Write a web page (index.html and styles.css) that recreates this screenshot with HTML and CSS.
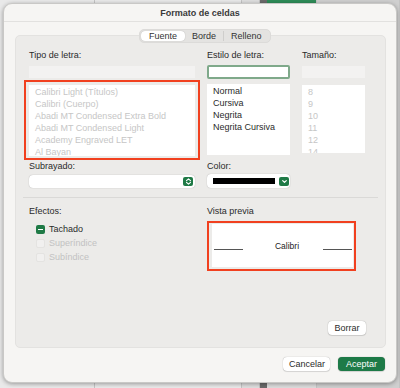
FILE: index.html
```html
<!DOCTYPE html>
<html lang="es">
<head>
  <meta charset="UTF-8" />
  <meta name="viewport" content="width=device-width, initial-scale=1" />
  <title>Formato de celdas</title>
  <link rel="stylesheet" href="styles.css">
</head>
<body>

  <!-- hoja de fondo -->
  <div class="sheet">
    <div class="col c1"></div>
    <div class="col c2"></div>
    <div class="col c3"></div>
    <div class="col c4"><span class="cell-green"></span></div>
    <div class="col c5"></div>
  </div>

  <div class="dialog">
    <div class="titlebar">Formato de celdas</div>

    <div class="body">
      <div class="tabs">
        <span class="tab active">Fuente</span>
        <span class="tab">Borde</span>
        <span class="tab sep">Relleno</span>
      </div>

      <div class="panel">
        <div class="row top">
          <div class="field f-name">
            <label>Tipo de letra:</label>
            <div class="input disabled"></div>
            <div class="mark list-mark">
              <ul class="list dim">
                <li>Calibri Light (Títulos)</li>
                <li>Calibri (Cuerpo)</li>
                <li>Abadi MT Condensed Extra Bold</li>
                <li>Abadi MT Condensed Light</li>
                <li>Academy Engraved LET</li>
                <li>Al Bayan</li>
              </ul>
            </div>
          </div>
          <div class="field f-style">
            <label>Estilo de letra:</label>
            <div class="input focus"></div>
            <ul class="list">
              <li>Normal</li>
              <li>Cursiva</li>
              <li>Negrita</li>
              <li>Negrita Cursiva</li>
            </ul>
          </div>
          <div class="field f-size">
            <label>Tamaño:</label>
            <div class="input disabled"></div>
            <ul class="list dim short">
              <li>8</li>
              <li>9</li>
              <li>10</li>
              <li>11</li>
              <li>12</li>
              <li>14</li>
            </ul>
          </div>
        </div>

        <div class="row mid">
          <div class="field f-name">
            <label>Subrayado:</label>
            <div class="select">
              <span class="stepper">
                <svg width="7" height="7" viewBox="0 0 7 7"><path d="M1.5 2.6 3.5 0.8 5.5 2.6M1.5 4.4 3.5 6.2 5.5 4.4" fill="none" stroke="#fff" stroke-width="1.1" stroke-linecap="round" stroke-linejoin="round"/></svg>
              </span>
            </div>
          </div>
          <div class="field f-color">
            <label>Color:</label>
            <div class="select color">
              <span class="swatch"></span>
              <span class="stepper">
                <svg width="7" height="7" viewBox="0 0 7 7"><path d="M1.7 2.6 3.5 4.4 5.3 2.6" fill="none" stroke="#fff" stroke-width="1.2" stroke-linecap="round" stroke-linejoin="round"/></svg>
              </span>
            </div>
          </div>
        </div>

        <hr class="divider">

        <div class="row bottom">
          <div class="field f-effects">
            <label>Efectos:</label>
            <div class="check on"><span class="box"></span>Tachado</div>
            <div class="check off"><span class="box"></span>Superíndice</div>
            <div class="check off"><span class="box"></span>Subíndice</div>
          </div>
          <div class="field f-preview">
            <label>Vista previa</label>
            <div class="mark preview-mark">
              <div class="preview">
                <span class="line"></span>
                <span class="sample">Calibri</span>
                <span class="line"></span>
              </div>
            </div>
          </div>
        </div>

        <div class="panel-foot">
          <button class="btn">Borrar</button>
        </div>
      </div>

      <div class="actions">
        <button class="btn">Cancelar</button>
        <button class="btn primary">Aceptar</button>
      </div>
    </div>
  </div>

</body>
</html>
```

FILE: styles.css
```css
* {
  box-sizing: border-box;
  font-family: 'Liberation Sans', Arial, sans-serif;
}
body {
  margin: 0;
  width: 400px;
  height: 388px;
  overflow: hidden;
  position: relative;
  background: #d2d2d2;
}

/* hoja de excel detras */
.sheet {
  display: flex;
  height: 100%;
}
.col {
  height: 100%;
  border-right: 1px solid #c4c4c4;
  background: #e9e9e9;
}
.c1 { width: 95px; }
.c2 { width: 147px; }
.c3 { width: 18px; background: #dedede; }
.c4 {
  width: 57px;
  background: #dcdcdc;
  border-left: 7px solid #6b6b6b;
}
.cell-green {
  display: block;
  height: 6px;
  background: #2e8b57;
}
.c5 { flex: 1; background: #cfcfcf; }

/* dialogo */
.dialog {
  position: absolute;
  left: 3px;
  top: 3px;
  width: 394px;
  height: 380px;
  background: #f6f5f3;
  border-radius: 9px;
  border: 1px solid #c9c8c6;
  box-shadow: 0 1px 4px rgba(0, 0, 0, 0.35);
}
.titlebar {
  height: 18px;
  line-height: 18px;
  text-align: center;
  font-size: 9px;
  font-weight: bold;
  color: #3a3a3a;
  border-bottom: 1px solid #e2e1df;
}
.body {
  position: relative;
  padding: 13px 10px 0 11px;
}
.tabs {
  position: absolute;
  top: 7px;
  left: 135px;
  display: flex;
  height: 14px;
  padding: 1px;
  background: #e4e3e1;
  border-radius: 5px;
  border: 1px solid #dcdbd9;
  z-index: 1;
}
.tab {
  font-size: 9px;
  line-height: 11px;
  color: #333;
  padding: 0 7px;
}
.tab.active {
  background: #fff;
  border-radius: 4px;
  padding: 0 8px;
  box-shadow: 0 0 1px rgba(0, 0, 0, 0.3);
}
.tab.sep {
  border-left: 1px solid #cfcecc;
}

.panel {
  height: 313px;
  background: #ecebe9;
  border: 1px solid #e3e2e0;
  border-radius: 5px;
  padding: 13px 8px 0 13px;
  display: flex;
  flex-direction: column;
}
.row {
  display: flex;
}
.field label {
  display: block;
  font-size: 9px;
  line-height: 12px;
  color: #2a2a2a;
  height: 12px;
}
.f-name { width: 166px; margin-right: 12px; }
.f-style { width: 83px; margin-right: 12px; }
.f-size { width: 63px; }
.f-color { width: 83px; }

.input {
  height: 12px;
  margin-top: 5px;
  background: #fff;
}
.input.disabled {
  background: #f3f2f1;
}
.input.focus {
  height: 14px;
  margin-top: 4px;
  border: 2px solid #7fa98a;
  border-radius: 2px;
}
.list {
  list-style: none;
  margin: 7px 0 0;
  padding: 1px 0 0 6px;
  height: 71px;
  background: #fff;
  overflow: hidden;
}
.list li {
  font-size: 9px;
  line-height: 12px;
  height: 12px;
  color: #2b2b2b;
  white-space: nowrap;
}
.list.dim li {
  color: #c6c6c6;
}
.list.short {
  height: 68px;
}
.f-style .list {
  margin-top: 5px;
}

/* recuadros rojos */
.mark {
  border: 2px solid #f1401f;
}
.list-mark {
  margin: 2px -5px 0 -5px;
  padding: 3px 3px 2px 3px;
}
.list-mark .list {
  margin: 0;
}

.mid {
  margin-top: 0;
}
.select {
  margin-top: 3px;
  height: 13px;
  background: #fff;
  border-radius: 4px;
  box-shadow: 0 0 1px rgba(0, 0, 0, 0.35);
  display: flex;
  align-items: center;
  justify-content: flex-end;
  padding: 0 2px;
}
.select.color {
  justify-content: space-between;
  padding: 0 1px 0 6px;
  height: 14px;
  margin-top: 2px;
}
.swatch {
  width: 62px;
  height: 6px;
  background: #000;
}
.stepper {
  width: 10px;
  height: 9px;
  background: #1f7a46;
  border-radius: 2px;
  display: flex;
  align-items: center;
  justify-content: center;
}

.divider {
  border: none;
  border-top: 1px solid #dad9d7;
  margin: 9px 0 0 -6px;
  width: 355px;
}

.bottom {
  margin-top: 7px;
}
.f-effects { width: 178px; }
.check {
  display: flex;
  align-items: center;
  font-size: 9px;
  height: 14px;
  color: #2b2b2b;
  margin-left: 7px;
}
.check:first-of-type { margin-top: 5px; }
.check .box {
  width: 9px;
  height: 9px;
  border-radius: 2px;
  margin-right: 4px;
  position: relative;
}
.check.on .box {
  background: #1f7a46;
}
.check.on .box::after {
  content: "";
  position: absolute;
  left: 2px;
  top: 4px;
  width: 5px;
  height: 1.5px;
  background: #fff;
}
.check.off {
  color: #c2c2c2;
}
.check.off .box {
  background: #f1f0ef;
  border: 1px solid #e4e3e1;
}

.preview-mark {
  width: 149px;
  height: 50px;
  margin-top: 4px;
  padding: 1px 1px 2px 3px;
  background: #ecebe9;
}
.preview {
  background: #fff;
  height: 100%;
  display: flex;
  align-items: center;
  justify-content: space-between;
  padding: 0 1px 0 2px;
}
.preview .line {
  width: 29px;
  border-top: 1px solid #555;
  margin-top: 7px;
}
.preview .sample {
  font-size: 8.5px;
  color: #222;
  margin-left: 8px;
}

.panel-foot {
  margin-top: auto;
  margin-bottom: 12px;
  display: flex;
  justify-content: flex-end;
  padding-right: 11px;
}
.btn {
  font-size: 9px;
  height: 14px;
  padding: 0 6px;
  border: none;
  border-radius: 4px;
  background: #fff;
  color: #2b2b2b;
  box-shadow: 0 0 1px rgba(0, 0, 0, 0.4), 0 1px 1px rgba(0, 0, 0, 0.1);
  cursor: pointer;
}
.panel-foot .btn {
  width: 38px;
}
.actions {
  display: flex;
  justify-content: flex-end;
  gap: 8px;
  margin-top: 9px;
  padding-right: 1px;
}
.actions .btn {
  width: 47px;
}
.btn.primary {
  background: #1d7a47;
  color: #fff;
}
```
